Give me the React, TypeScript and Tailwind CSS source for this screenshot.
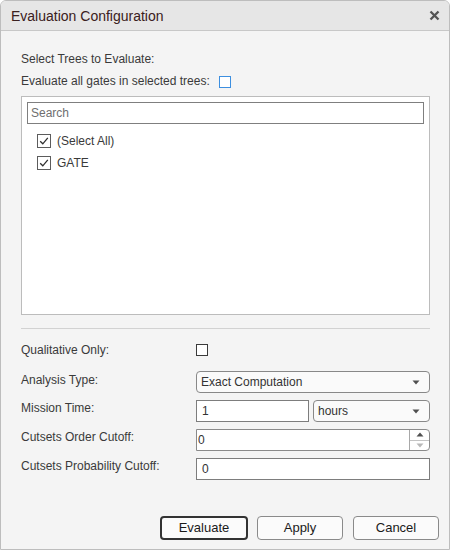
import React from "react";

function Check() {
  return (
    <svg width="14" height="14" viewBox="0 0 14 14" className="block">
      <rect x="0.5" y="0.5" width="13" height="13" fill="#ffffff" stroke="#5c5c5c" />
      <path d="M3.2 7.2 L5.8 9.8 L10.8 3.8" fill="none" stroke="#2f2f2f" strokeWidth="1.3" />
    </svg>
  );
}

function Caret() {
  return (
    <svg width="8" height="5" viewBox="0 0 8 5" className="block">
      <path d="M0.5 0.5 L7.5 0.5 L4 4.5 Z" fill="#4f4f4f" />
    </svg>
  );
}

function Dropdown({ value, className }: { value: string; className: string }) {
  return (
    <div
      className={
        "h-[22px] flex items-center justify-between rounded-[4px] border border-[#888888] bg-[#fafafa] pl-[4px] pr-[9px] " +
        className
      }
    >
      <span className="text-[12px] leading-[14px] text-[#333333]">{value}</span>
      <Caret />
    </div>
  );
}

export default function App() {
  return (
    <div className="w-[450px] h-[550px] flex flex-col border border-[#bdbdbd] rounded-t-[6px] bg-[#f4f4f4] overflow-hidden font-['Liberation_Sans',Arial,sans-serif] text-[#3a3a3a]">
      {/* Title bar */}
      <div className="h-[30px] shrink-0 flex items-center justify-between bg-[#e6e6e6] border-b border-[#c8c8c8] pl-[10px] pr-[9px]">
        <span className="text-[14px] leading-[16px] text-[#3a2020]">Evaluation Configuration</span>
        <svg width="11" height="11" viewBox="0 0 11 11" className="block">
          <path d="M1.5 1.5 L9.5 9.5 M9.5 1.5 L1.5 9.5" stroke="#555555" strokeWidth="2.3" strokeLinecap="butt" />
        </svg>
      </div>

      {/* Body */}
      <div className="flex-1 flex flex-col pl-[20px] pr-[19px] pt-[21px]">
        <div className="h-[14px] text-[12px] leading-[14px]">Select Trees to Evaluate:</div>
        <div className="mt-[8px] h-[14px] flex items-start">
          <span className="text-[12px] leading-[14px]">Evaluate all gates in selected trees:</span>
          <div className="ml-[9px] mt-[2px] w-[12px] h-[12px] border border-[#3d8fe0] bg-white" />
        </div>

        {/* List box */}
        <div className="mt-[8px] h-[219px] border border-[#bcbcbc] bg-white pl-[5px] pr-[5px] pt-[5px]">
          <div className="h-[22px] border border-[#7f7f7f] bg-white flex items-center pl-[3px]">
            <span className="text-[12px] leading-[14px] text-[#6f6f6f]">Search</span>
          </div>
          <div className="mt-[6px] flex flex-col pl-[10px]">
            <div className="h-[22px] flex items-center gap-[6px]">
              <Check />
              <span className="text-[12px] leading-[14px] text-[#3a3a3a]">(Select All)</span>
            </div>
            <div className="h-[22px] flex items-center gap-[6px]">
              <Check />
              <span className="text-[12px] leading-[14px] text-[#3a3a3a]">GATE</span>
            </div>
          </div>
        </div>

        <div className="mt-[13px] h-px bg-[#d2d2d2]" />

        {/* Form */}
        <div className="mt-[10px] h-[22px] flex items-center">
          <span className="w-[175px] shrink-0 text-[12px] leading-[14px]">Qualitative Only:</span>
          <div className="w-[12px] h-[12px] border border-[#3a3a3a] bg-white" />
        </div>

        <div className="mt-[10px] flex items-start">
          <span className="w-[175px] shrink-0 mt-[2px] text-[12px] leading-[14px]">Analysis Type:</span>
          <Dropdown value="Exact Computation" className="flex-1" />
        </div>

        <div className="mt-[7px] flex items-start">
          <span className="w-[175px] shrink-0 mt-[1px] text-[12px] leading-[14px]">Mission Time:</span>
          <div className="w-[113px] h-[22px] border border-[#7d7d7d] bg-white flex items-center pl-[5px]">
            <span className="text-[12px] leading-[14px] text-[#333333]">1</span>
          </div>
          <Dropdown value="hours" className="ml-[4px] flex-1" />
        </div>

        <div className="mt-[7px] flex items-start">
          <span className="w-[175px] shrink-0 mt-[1px] text-[12px] leading-[14px]">Cutsets Order Cutoff:</span>
          <div className="flex-1 h-[22px] flex border border-[#8a8a8a] rounded-r-[4px] bg-white">
            <div className="flex-1 flex items-center pl-[1px]">
              <span className="text-[12px] leading-[14px] text-[#333333]">0</span>
            </div>
            <div className="w-[20px] flex flex-col border-l border-[#a8a8a8]">
              <div className="flex-1 flex items-center justify-center border-b border-[#c4c4c4]">
                <svg width="8" height="5" viewBox="0 0 8 5" className="block">
                  <path d="M0.5 4.5 L7.5 4.5 L4 0.5 Z" fill="#505050" />
                </svg>
              </div>
              <div className="flex-1 flex items-center justify-center">
                <svg width="8" height="5" viewBox="0 0 8 5" className="block">
                  <path d="M0.5 0.5 L7.5 0.5 L4 4.5 Z" fill="#b8b8b8" />
                </svg>
              </div>
            </div>
          </div>
        </div>

        <div className="mt-[7px] flex items-start">
          <span className="w-[175px] shrink-0 mt-[1px] text-[12px] leading-[14px]">Cutsets Probability Cutoff:</span>
          <div className="flex-1 h-[22px] border border-[#7d7d7d] bg-white flex items-center pl-[5px]">
            <span className="text-[12px] leading-[14px] text-[#333333]">0</span>
          </div>
        </div>
      </div>

      {/* Footer buttons */}
      <div className="shrink-0 flex justify-end pr-[10px] pb-[9px]">
        <button className="w-[88px] h-[24px] rounded-[4px] border-2 border-[#333333] bg-[#fbfbfb] text-[13px] leading-[16px] text-[#1a1a1a] font-['Liberation_Sans',Arial,sans-serif]">
          Evaluate
        </button>
        <button className="ml-[9px] w-[86px] h-[24px] rounded-[4px] border border-[#8a8a8a] bg-[#fbfbfb] text-[13px] leading-[16px] text-[#1a1a1a] font-['Liberation_Sans',Arial,sans-serif]">
          Apply
        </button>
        <button className="ml-[10px] w-[86px] h-[24px] rounded-[4px] border border-[#8a8a8a] bg-[#fbfbfb] text-[13px] leading-[16px] text-[#1a1a1a] font-['Liberation_Sans',Arial,sans-serif]">
          Cancel
        </button>
      </div>
    </div>
  );
}
